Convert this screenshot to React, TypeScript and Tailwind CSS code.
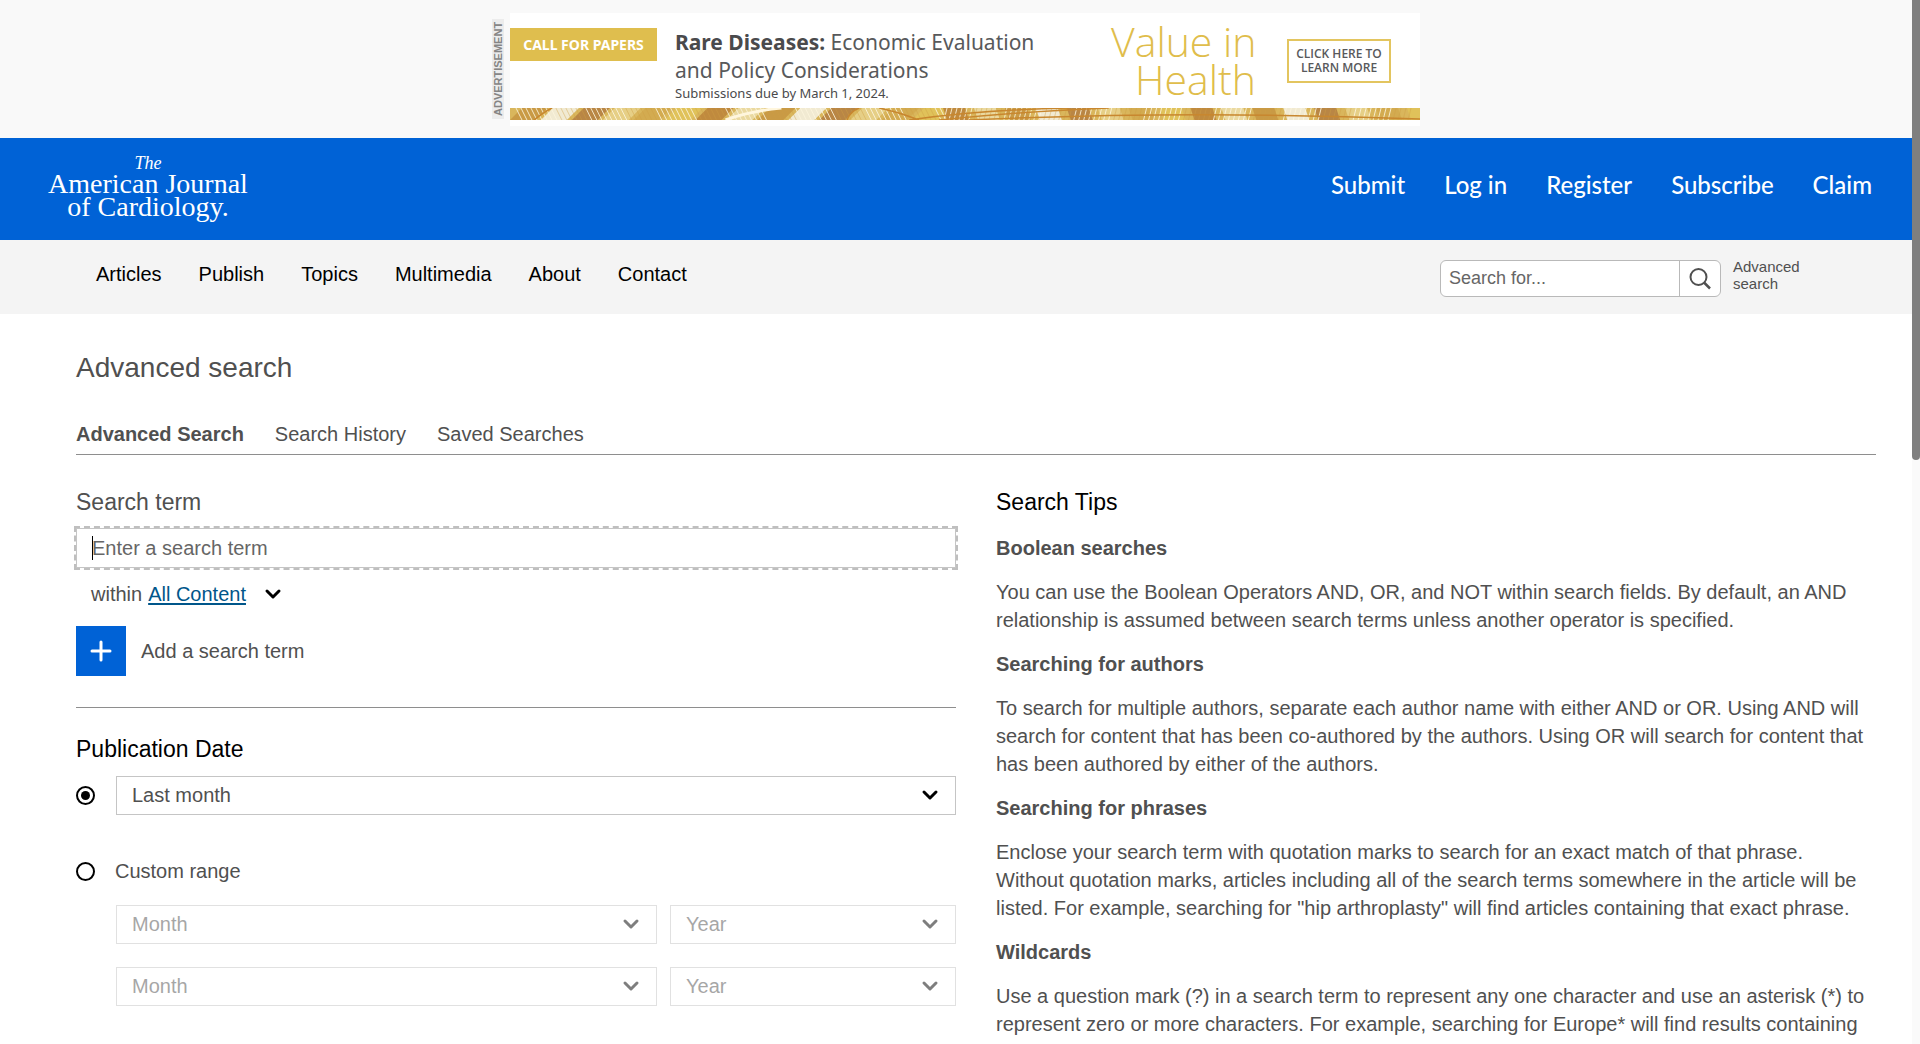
import { ChevronDown } from "lucide-react";
import type { ReactNode } from "react";

const STRIPE_COLORS = ["#c99a45", "#e0c25a", "#b98645", "#ead9a0", "#d3ab50", "#f1ead2", "#c08a3e", "#e6cf86"];

function BannerStrip() {
  const bands = Array.from({ length: 30 }, (_, i) => i);
  const hairs = Array.from({ length: 180 }, (_, i) => i);
  return (
    <svg className="block h-3 w-full" viewBox="0 0 912 12" preserveAspectRatio="none" aria-hidden="true">
      <rect width="912" height="12" fill="#d9b65c" />
      {bands.map((i) => (
        <path
          key={i}
          d={i < 14 ? `M${i * 31} 12 l12 -12 h26 l-12 12 Z` : `M${i * 31} 0 l4 12 h22 l-4 -12 Z`}
          fill={STRIPE_COLORS[(i * 5) % 8]}
        />
      ))}
      {hairs.map((i) => (
        <path
          key={i}
          d={i < 86 ? `M${i * 5 + 6} 0 l6 12` : `M${i * 5 + 8} 0 l-3 12`}
          stroke={i % 14 < 8 ? "#fdf6df" : "#d0a044"}
          strokeWidth="1"
          opacity={i % 14 < 8 ? 0.85 : 0.4}
        />
      ))}
      <path
        d="M24 12 Q34 4 42 0 M338 12 Q340 4 350 0 M400 12 Q470 2 560 0 M430 12 Q520 3 600 0 M460 12 Q680 2 912 11 M370 0 Q390 4 410 12"
        fill="none"
        stroke="#c8872f"
        strokeWidth="1.5"
      />
      <path d="M216 12 Q240 3 272 0" fill="none" stroke="#fff6dd" strokeWidth="3" />
    </svg>
  );
}

function Banner() {
  return (
    <div className="flex h-[138px] justify-center bg-[#f9f9f9] pt-[13px]">
      <span className="mt-1.5 h-[100px] w-3 rotate-180 bg-[#ececec] text-center text-[11px] leading-3 font-bold text-[#858585] [writing-mode:vertical-rl]">
        ADVERTISEMENT
      </span>
      <a href="#" className="relative ml-1.5 block h-[113px] w-[910px] bg-white font-['Noto_Sans',sans-serif] text-[#58595b]">
        <div className="flex items-start">
          <span className="mt-[15px] flex h-[33px] w-[147px] items-center justify-center bg-[#dfbe4e] text-[14px] font-bold text-white">
            CALL FOR PAPERS
          </span>
          <p className="ml-[18px] w-[400px] pt-[15px] text-[21px] leading-7">
            <b className="text-[#4a4a4c]">Rare Diseases:</b> Economic Evaluation
            <br />
            and Policy Considerations
            <span className="block text-[13px] leading-[18px] text-[#4a4a4c]">Submissions due by March 1, 2024.</span>
          </p>
          <p className="ml-9 flex w-[150px] flex-col pt-[9px] font-['Open_Sans',sans-serif] text-[41px] leading-[38px] font-light whitespace-nowrap text-[#e0bd4b]">
            <span>Value in</span>
            <span className="pl-6">Health</span>
          </p>
          <span className="mt-[26px] ml-[26px] flex h-11 w-[104px] items-center justify-center border-2 border-[#e3c55f] text-center font-['Open_Sans',sans-serif] text-[12px] leading-[14px] font-semibold">
            CLICK HERE TO
            <br />
            LEARN MORE
          </span>
        </div>
        <div className="absolute inset-x-0 bottom-1.5">
          <BannerStrip />
        </div>
      </a>
    </div>
  );
}

function Logo() {
  return (
    <a href="#" className="flex w-[216px] flex-col items-center font-['Liberation_Serif',serif] text-[28px] leading-[23px] whitespace-nowrap text-white">
      <i className="text-[18px] leading-[18px]">The</i>
      <span>American Journal</span>
      <span>of Cardiology.</span>
    </a>
  );
}

function Header() {
  return (
    <header className="flex h-[102px] justify-between bg-[#0062d6] px-10">
      <div className="pt-4">
        <Logo />
      </div>
      <nav className="flex gap-[39px] pt-[31px] font-['Lato',sans-serif] text-[24px] leading-8 font-medium text-white">
        {["Submit", "Log in", "Register", "Subscribe", "Claim"].map((t) => (
          <a key={t} href="#">{t}</a>
        ))}
      </nav>
    </header>
  );
}

function NavBar() {
  return (
    <div className="flex h-[74px] justify-between bg-[#f4f4f4] pr-[104px] pl-24">
      <nav className="flex gap-[37px] pt-5 text-[20px] leading-7 text-black">
        {["Articles", "Publish", "Topics", "Multimedia", "About", "Contact"].map((t) => (
          <a key={t} href="#">{t}</a>
        ))}
      </nav>
      <form className="flex items-start pt-[18px]" onSubmit={(e) => e.preventDefault()}>
        <div className="mt-0.5 flex h-[37px] w-[281px] overflow-hidden rounded-md border border-[#b9b9b9] bg-white">
          <input
            aria-label="Search for"
            placeholder="Search for..."
            className="min-w-0 flex-1 px-2 text-[18px] text-[#505050] outline-none placeholder:text-[#666666]"
          />
          <button type="submit" aria-label="Search" className="flex w-[41px] items-center justify-center border-l border-[#b9b9b9] text-[#505050]">
            <svg className="size-6" viewBox="0 0 24 24" fill="none" stroke="currentColor" strokeWidth="2" aria-hidden="true">
              <circle cx="10.5" cy="10" r="8" />
              <path d="M16 15.5l6 6" strokeWidth="2.5" />
            </svg>
          </button>
        </div>
        <a href="#" className="ml-3 w-[75px] text-[15px] leading-[17px] text-[#505050]">Advanced search</a>
      </form>
    </div>
  );
}

function SelectBox({ name, value, disabled = false }: { name: string; value: string; disabled?: boolean }) {
  return (
    <div className={disabled ? "relative opacity-50" : "relative"}>
      <select
        aria-label={name}
        disabled={disabled}
        className="block h-[39px] w-full appearance-none border border-[#c5c5c5] bg-white px-[15px] pb-0.5 text-[20px] leading-7 text-[#505050]"
      >
        <option>{value}</option>
      </select>
      <ChevronDown size={24} strokeWidth={3} className="pointer-events-none absolute top-[7px] right-[14px] text-black" />
    </div>
  );
}

function Radio({ id, label, checked = false }: { id: string; label?: string; checked?: boolean }) {
  return (
    <input
      type="radio"
      name="range"
      id={id}
      aria-label={label}
      defaultChecked={checked}
      className="size-[19px] shrink-0 appearance-none rounded-full border-2 border-black bg-white p-[3px] checked:bg-black checked:bg-clip-content"
    />
  );
}

function SearchForm() {
  return (
    <form className="w-[880px] text-[20px] leading-7" onSubmit={(e) => e.preventDefault()}>
      <label htmlFor="term" className="block text-[23px] leading-8">Search term</label>
      <div className="relative mt-2.5">
        <input
          id="term"
          placeholder="Enter a search term"
          className="block h-10 w-full border border-[#c5c5c5] px-[15px] outline-2 outline-[#bfbfbf] outline-dashed placeholder:text-[#666666]"
        />
        <span className="pointer-events-none absolute top-2 left-4 h-6 w-px bg-black" />
      </div>
      <div className="mt-3 flex items-center pl-[15px]">
        within
        <button type="button" className="ml-1.5 flex items-center gap-[15px] text-[#00568a]">
          <span className="underline underline-offset-2">All Content</span>
          <ChevronDown size={24} strokeWidth={3} className="text-black" />
        </button>
      </div>
      <button type="button" className="mt-[18px] flex items-center gap-[15px]">
        <span className="flex size-[50px] items-center justify-center bg-[#0062d6]">
          <svg className="size-[22px] text-white" viewBox="0 0 22 22" fill="none" stroke="currentColor" strokeWidth="3" strokeLinecap="round" aria-hidden="true">
            <path d="M11 2v18M2 11h18" />
          </svg>
        </span>
        Add a search term
      </button>
      <fieldset className="mt-[31px] border-t border-[#8e8e8e] pt-[25px]">
        <h2 className="text-[23px] leading-8 text-black">Publication Date</h2>
        <div className="mt-[11px] grid grid-cols-[19px_1fr] items-center gap-x-[21px]">
          <Radio id="preset" label="Preset range" checked />
          <SelectBox name="Publication date" value="Last month" />
        </div>
        <div className="mt-[42px] grid grid-cols-[19px_1fr] items-center gap-x-5">
          <Radio id="custom" />
          <label htmlFor="custom">Custom range</label>
        </div>
        <div className="mt-5 grid grid-cols-[541px_1fr] gap-x-[13px] gap-y-[23px] pl-10">
          <SelectBox name="From month" value="Month" disabled />
          <SelectBox name="From year" value="Year" disabled />
          <SelectBox name="To month" value="Month" disabled />
          <SelectBox name="To year" value="Year" disabled />
        </div>
      </fieldset>
    </form>
  );
}

function Tip({ title, children }: { title: string; children: ReactNode }) {
  return (
    <section className="mt-4">
      <h3 className="font-bold">{title}</h3>
      <p className="mt-4">{children}</p>
    </section>
  );
}

function Tips() {
  return (
    <aside className="min-w-0 flex-1 text-[20px] leading-7">
      <h2 className="text-[23px] leading-8 text-black">Search Tips</h2>
      <Tip title="Boolean searches">
        You can use the Boolean Operators AND, OR, and NOT within search fields. By default, an AND relationship is
        assumed between search terms unless another operator is specified.
      </Tip>
      <Tip title="Searching for authors">
        To search for multiple authors, separate each author name with either AND or OR. Using AND will search for
        content that has been co-authored by the authors. Using OR will search for content that has been authored by
        either of the authors.
      </Tip>
      <Tip title="Searching for phrases">
        Enclose your search term with quotation marks to search for an exact match of that phrase. Without quotation
        marks, articles including all of the search terms somewhere in the article will be listed. For example,
        searching for "hip arthroplasty" will find articles containing that exact phrase.
      </Tip>
      <Tip title="Wildcards">
        Use a question mark (?) in a search term to represent any one character and use an asterisk (*) to represent
        zero or more characters. For example, searching for Europe* will find results containing
      </Tip>
    </aside>
  );
}

export default function App() {
  return (
    <div className="flex h-screen overflow-hidden bg-white font-['Liberation_Sans',Arial,sans-serif] text-[#505050]">
      <div className="min-w-0 flex-1">
        <Banner />
        <Header />
        <NavBar />
        <main className="pt-9 pr-9 pl-[76px]">
          <h1 className="text-[28px] leading-9">Advanced search</h1>
          <nav className="mt-[34px] flex gap-[31px] border-b border-[#8e8e8e] pb-1.5 text-[20px] leading-7">
            <a href="#" className="font-bold">Advanced Search</a>
            <a href="#">Search History</a>
            <a href="#">Saved Searches</a>
          </nav>
          <div className="mt-[31px] flex gap-10">
            <SearchForm />
            <Tips />
          </div>
        </main>
      </div>
      <div className="w-2 bg-[#fafafa]">
        <div className="h-[460px] rounded-b-sm bg-[#7f7f7f]" />
      </div>
    </div>
  );
}
